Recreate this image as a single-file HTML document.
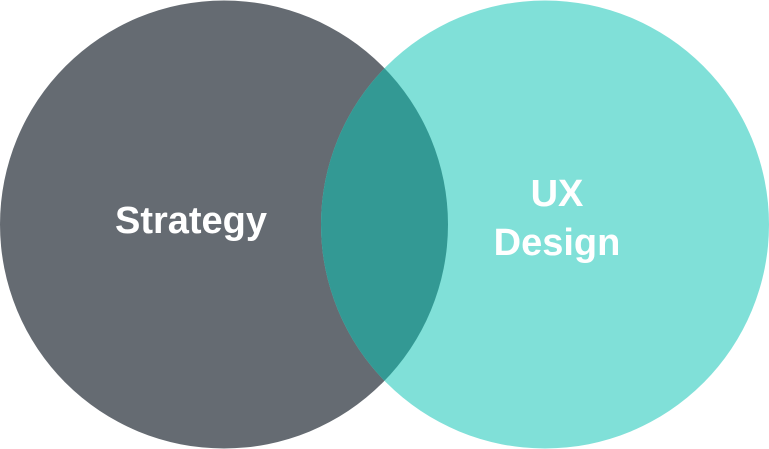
<!DOCTYPE html>
<html><head><meta charset="utf-8"><style>
html,body{margin:0;padding:0;background:#fff;width:769px;height:449px;overflow:hidden}
svg{display:block}
text{font-family:"Liberation Sans",sans-serif;font-weight:bold;fill:#fff;font-size:38px}
</style></head><body>
<svg width="769" height="449" viewBox="0 0 769 449">
<defs><clipPath id="c"><circle cx="224" cy="224.5" r="224"/></clipPath></defs>
<circle cx="224" cy="224.5" r="224" fill="#656b72"/>
<circle cx="545" cy="224.5" r="224" fill="#80e0d8"/>
<circle cx="545" cy="224.5" r="224" fill="#339994" clip-path="url(#c)"/>
<text x="191" y="233" text-anchor="middle">Strategy</text>
<text x="557" y="206" text-anchor="middle">UX</text>
<text x="557" y="255" text-anchor="middle">Design</text>
</svg>
</body></html>
